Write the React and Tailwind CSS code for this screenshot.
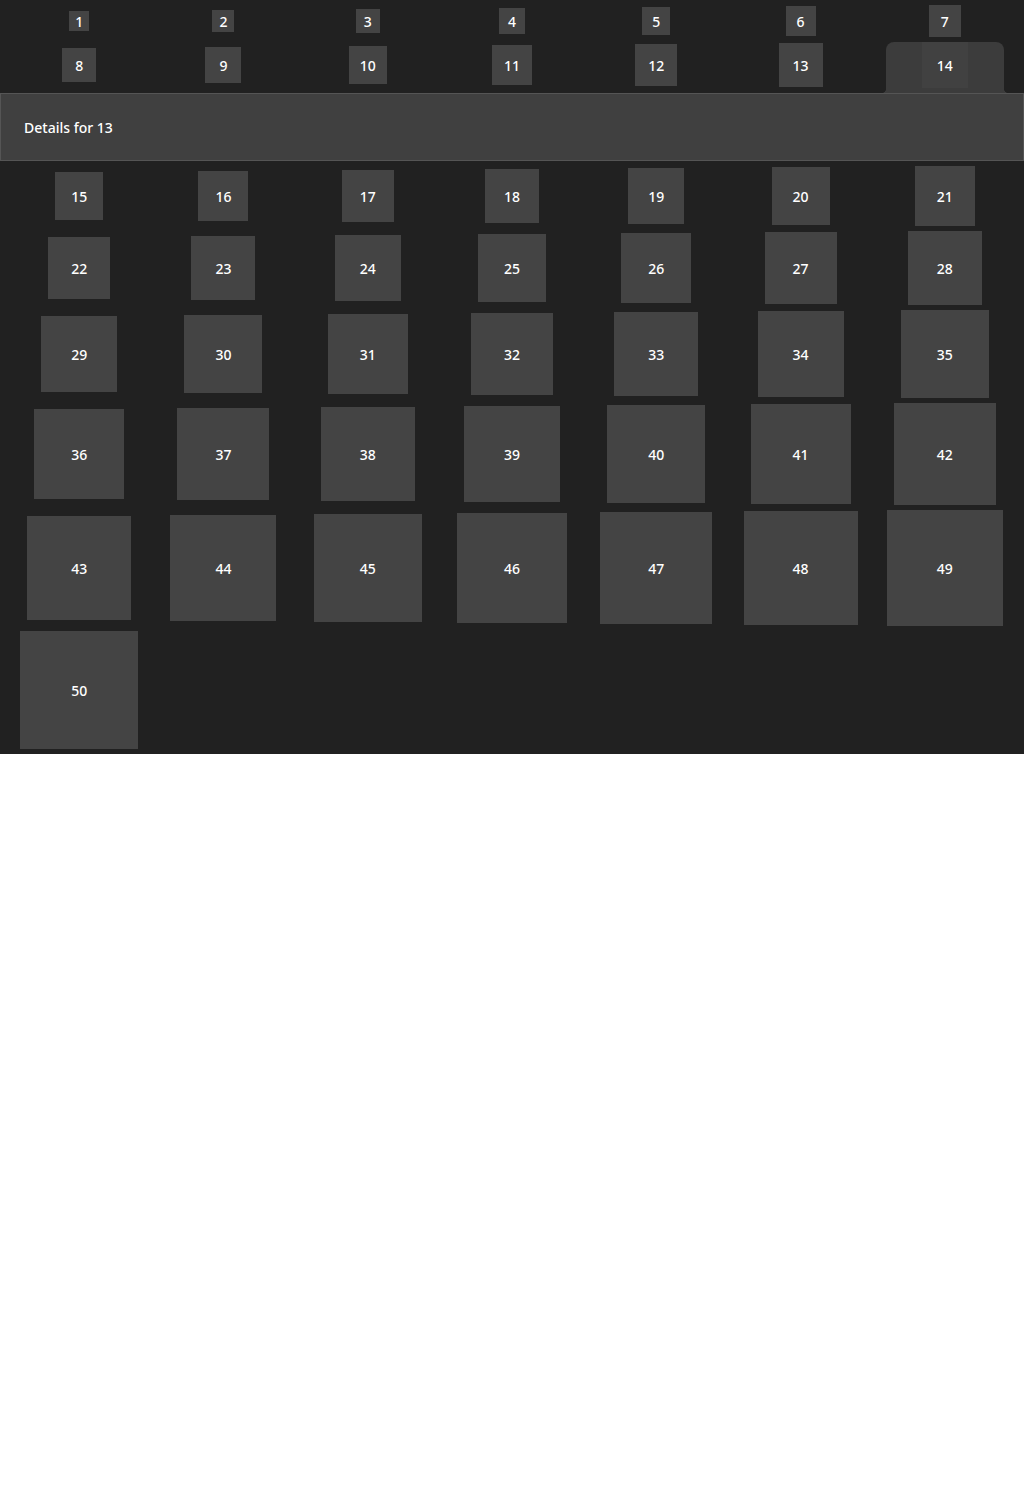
import React from "react";

const font = { fontFamily: '"Noto Sans", "Open Sans", sans-serif' };

function Box({ n, active }) {
  const size = 18 + 2 * n;
  return (
    <div
      className={`relative z-10 flex items-center justify-center text-sm font-medium text-white ${active ? "bg-[#414141]" : "bg-[#444444]"}`}
      style={{ width: size, height: size }}
    >
      <span className="translate-y-[1px]">{n}</span>
    </div>
  );
}

function Row({ items, activeN }) {
  return (
    <div className="grid grid-cols-7 items-center justify-items-center gap-x-[2px] px-[8px]">
      {items.map((n) => (
        <div key={n} className="relative flex items-center justify-center">
          {n === activeN && (
            <div className="absolute left-1/2 top-0 h-[51px] w-[118px] -translate-x-1/2 rounded-t-[8px] bg-[#3c3c3c]">
              <span className="absolute bottom-0 left-[-5px] h-[5px] w-[5px] bg-[radial-gradient(circle_at_0_0,transparent_5px,#3c3c3c_5.5px)]" />
              <span className="absolute bottom-0 right-[-5px] h-[5px] w-[5px] bg-[radial-gradient(circle_at_100%_0,transparent_5px,#3c3c3c_5.5px)]" />
            </div>
          )}
          <Box n={n} active={n === activeN} />
        </div>
      ))}
    </div>
  );
}

export default function App() {
  const rows = [];
  for (let i = 0; i < 50; i += 7) {
    rows.push(Array.from({ length: Math.min(7, 50 - i) }, (_, k) => i + k + 1));
  }
  return (
    <div className="w-[1024px] bg-[#212121] py-[5px]" style={font}>
      <div className="flex flex-col gap-[5px]">
        <Row items={rows[0]} />
        <Row items={rows[1]} activeN={14} />
        <div className="relative z-20 flex h-[68px] items-center border border-[#555555] bg-[#404040] pl-[23px] text-sm font-medium text-white">
          <span className="translate-y-[1px]">Details for 13</span>
        </div>
        {rows.slice(2).map((r, i) => (
          <Row key={i} items={r} />
        ))}
      </div>
    </div>
  );
}
